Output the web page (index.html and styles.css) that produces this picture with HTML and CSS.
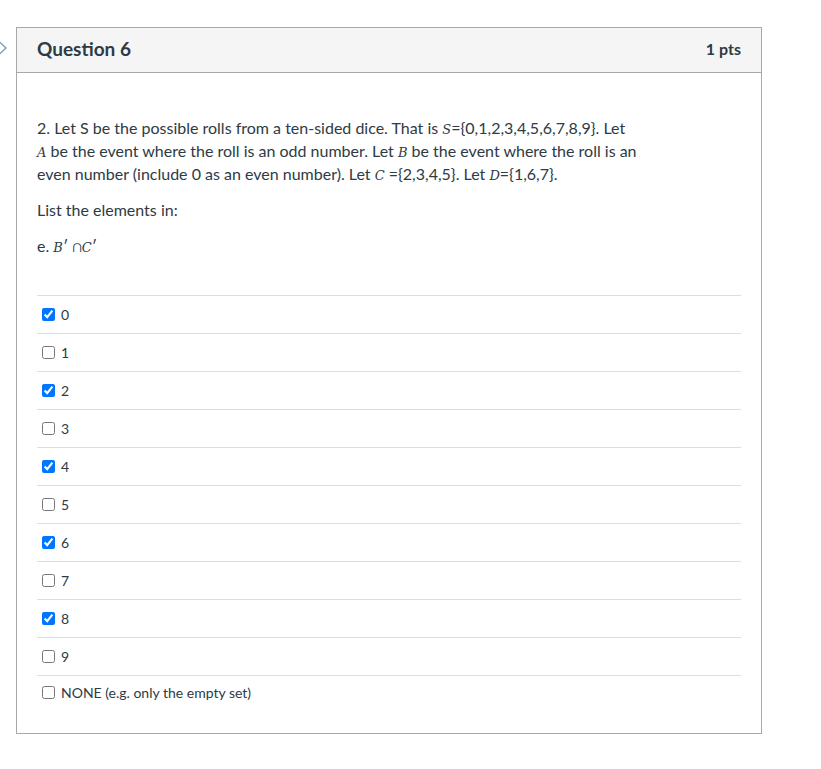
FILE: index.html
```html
<!DOCTYPE html>
<html lang="en">
<head>
<meta charset="utf-8">
<title>Question 6</title>
<link rel="stylesheet" href="styles.css">
</head>
<body>
<div class="page">
  <div class="gutter">
    <svg class="nav-arrow" width="16" height="16" viewBox="0 0 16 16"><path d="M-2 0.5 L6 8 L-2 15.5" fill="none" stroke="#8099b9" stroke-width="1.4"/></svg>
  </div>
  <div class="question">
    <div class="q-header">
      <span class="q-title">Question 6</span>
      <span class="q-points">1 pts</span>
    </div>
    <div class="q-body">
      <p class="q-text">2. Let S be the possible rolls from a ten-sided dice. That is <span class="m">S</span>={0,1,2,3,4,5,6,7,8,9}. Let<br><span class="m">A</span> be the event where the roll is an odd number. Let <span class="m">B</span> be the event where the roll is an<br>even number (include 0 as an even number). Let <span class="m">C</span> ={2,3,4,5}. Let <span class="m">D</span>={1,6,7}.</p>
      <p class="q-text">List the elements in:</p>
      <p class="q-text">e. <span class="m">B</span>&#8242; &#8745;<span class="m">C</span>&#8242;</p>
      <div class="answers">
        <label class="answer"><input type="checkbox" checked> <span>0</span></label>
        <label class="answer"><input type="checkbox"> <span>1</span></label>
        <label class="answer"><input type="checkbox" checked> <span>2</span></label>
        <label class="answer"><input type="checkbox"> <span>3</span></label>
        <label class="answer"><input type="checkbox" checked> <span>4</span></label>
        <label class="answer"><input type="checkbox"> <span>5</span></label>
        <label class="answer"><input type="checkbox" checked> <span>6</span></label>
        <label class="answer"><input type="checkbox"> <span>7</span></label>
        <label class="answer"><input type="checkbox" checked> <span>8</span></label>
        <label class="answer"><input type="checkbox"> <span>9</span></label>
        <label class="answer last"><input type="checkbox"> <span>NONE (e.g. only the empty set)</span></label>
      </div>
    </div>
  </div>
</div>
</body>
</html>
```

FILE: styles.css
```css
html, body {
  margin: 0;
  padding: 0;
  background: #ffffff;
}
body {
  font-family: Lato, "Open Sans", sans-serif;
  color: #2d3b45;
}
.page {
  display: flex;
  align-items: flex-start;
  padding-top: 27px;
}
.gutter {
  width: 16px;
  flex: none;
  padding-top: 13px;
}
.nav-arrow {
  display: block;
  overflow: hidden;
}
.question {
  width: 744px;
  border: 1px solid #a8a8a8;
  background: #fff;
}
.q-header {
  display: flex;
  justify-content: space-between;
  align-items: center;
  height: 45px;
  padding: 0 20px 4px 20px;
  box-sizing: border-box;
  background: #f5f5f5;
  border-bottom: 1px solid #a8a8a8;
  font-weight: 700;
}
.q-title {
  font-size: 19px;
}
.q-points {
  font-size: 16px;
  color: #2d3b45;
}
.q-body {
  padding: 43px 20px 24px 20px;
}
.q-text {
  margin: 0 0 13px 0;
  font-size: 16px;
  line-height: 23px;
}
.m {
  font-family: "DejaVu Serif", "Liberation Serif", serif;
  font-style: italic;
  font-size: 13px;
  line-height: 1;
}
.answers {
  margin-top: 38px;
}
.answer {
  display: flex;
  align-items: center;
  height: 37px;
  border-top: 1px solid #dddddd;
  font-size: 14px;
}
.answer.last {
  height: 33px;
}
.answer input {
  margin: 0 6px 0 5px;
  width: 13px;
  height: 13px;
}
```
